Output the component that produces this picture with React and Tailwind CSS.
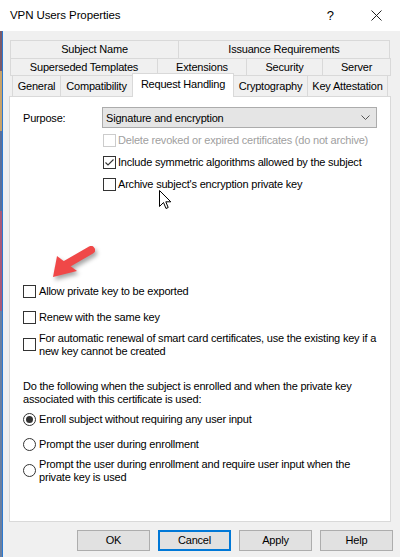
import React from "react";

const font = { fontFamily: '"Liberation Sans", Arial, sans-serif' };

function Box({ checked, disabled }) {
  return (
    <div
      className={
        "w-[13px] h-[13px] shrink-0 border bg-white flex items-center justify-center " +
        (disabled ? "border-[#cccccc]" : "border-[#333333]")
      }
    >
      {checked && (
        <svg width="11" height="11" viewBox="0 0 11 11">
          <polyline points="1.5,5.5 4,8 9.5,2.5" fill="none" stroke="#333" strokeWidth="1.1" />
        </svg>
      )}
    </div>
  );
}

function Radio({ checked }) {
  return (
    <div className="w-[13px] h-[13px] shrink-0 rounded-full border border-[#333333] bg-white flex items-center justify-center">
      {checked && <div className="w-[7px] h-[7px] rounded-full bg-[#333333]" />}
    </div>
  );
}

function Tab({ w, children, className = "" }) {
  return (
    <div
      className={
        "h-full -ml-px first:ml-0 border border-[#d9d9d9] bg-[#f0f0f0] flex items-center justify-center whitespace-nowrap " +
        w +
        " " +
        className
      }
    >
      {children}
    </div>
  );
}

function Btn({ children, focus }) {
  return (
    <div
      className={
        "w-[73px] h-[21px] bg-[#e1e1e1] flex items-center justify-center " +
        (focus ? "border-2 border-[#0078d7]" : "border border-[#adadad]")
      }
    >
      {children}
    </div>
  );
}

export default function App() {
  return (
    <div
      className="w-[400px] h-[557px] bg-[#f0f0f0] flex flex-col overflow-hidden relative text-[11px] text-black tracking-[-0.2px] leading-[13px]"
      style={font}
    >
      {/* Title bar */}
      <div className="h-[31px] bg-white flex items-center shrink-0">
        <span className="ml-[10px] text-[11.5px] tracking-[-0.1px]">VPN Users Properties</span>
        <span className="ml-auto text-[13px] mr-[37px] tracking-normal">?</span>
        <svg width="11" height="11" viewBox="0 0 11 11" className="mr-[18px]">
          <path d="M0.5 0.5 L10.5 10.5 M10.5 0.5 L0.5 10.5" stroke="#222" strokeWidth="1" />
        </svg>
      </div>

      {/* Body */}
      <div className="flex-1 flex">
        <div className="w-[2px] flex flex-col">
          <div className="h-[40px] bg-[#7a5a6a]" />
          <div className="h-[60px] bg-[#c9a36a]" />
          <div className="h-[80px] bg-[#5a6f9a]" />
          <div className="h-[100px] bg-[#a85a7a]" />
          <div className="flex-1 bg-[#6a7fa0]" />
        </div>
        <div className="flex-1 border-l border-[#2b79d0] flex flex-col">
          <div className="pt-[9px] pl-[7px] flex flex-col">
            {/* Row 1 */}
            <div className="flex h-[19px]">
              <Tab w="w-[169px]">Subject Name</Tab>
              <Tab w="w-[212px]">Issuance Requirements</Tab>
            </div>
            {/* Row 2 */}
            <div className="flex h-[18px] -mt-px">
              <Tab w="w-[148px]">Superseded Templates</Tab>
              <Tab w="w-[90px]">Extensions</Tab>
              <Tab w="w-[77px]">Security</Tab>
              <Tab w="w-[69px]">Server</Tab>
            </div>
            {/* Row 3 */}
            <div className="flex h-[22px] -mt-px ml-[2px] items-end relative z-10">
              <Tab w="w-[49px]">General</Tab>
              <Tab w="w-[73px]">Compatibility</Tab>
              <div className="w-[102px] h-[24px] -ml-px border border-b-0 border-[#d9d9d9] bg-white flex items-start pt-[4px] justify-center whitespace-nowrap self-start -mt-[2px]">
                Request Handling
              </div>
              <Tab w="w-[75px]">Cryptography</Tab>
              <Tab w="w-[81px]">Key Attestation</Tab>
            </div>
          </div>

          {/* Panel */}
          <div className="ml-[6px] -mt-px w-[382px] h-[426px] border border-[#d9d9d9] bg-white pl-[13px] pt-[10px] flex flex-col">
            <div className="flex items-center h-[21px]">
              <span className="w-[79px] pt-[1px]">Purpose:</span>
              <div className="w-[275px] h-[21px] bg-[#e5e5e5] border border-[#acacac] flex items-center pl-[3px] pr-[6px]">
                <span className="pt-[1px]">Signature and encryption</span>
                <svg width="9" height="5" viewBox="0 0 9 5" className="ml-auto">
                  <polyline points="0.5,0.5 4.5,4.5 8.5,0.5" fill="none" stroke="#555" strokeWidth="1" />
                </svg>
              </div>
            </div>

            <div className="ml-[80px] mt-[1px] flex flex-col">
              <div className="h-[22px] flex items-center gap-[2px]">
                <Box disabled />
                <span className="text-[#a0a0a0] whitespace-nowrap pt-[1px]">Delete revoked or expired certificates (do not archive)</span>
              </div>
              <div className="h-[22px] flex items-center gap-[2px]">
                <Box checked />
                <span className="whitespace-nowrap pt-[1px]">Include symmetric algorithms allowed by the subject</span>
              </div>
              <div className="h-[22px] flex items-center gap-[2px]">
                <Box />
                <span className="whitespace-nowrap pt-[1px]">Archive subject's encryption private key</span>
              </div>
            </div>

            <div className="mt-[85px] h-[22px] flex items-center gap-[3px]">
              <Box />
              <span className="whitespace-nowrap pt-[1px]">Allow private key to be exported</span>
            </div>
            <div className="mt-[4px] h-[22px] flex items-center gap-[3px]">
              <Box />
              <span className="whitespace-nowrap pt-[1px]">Renew with the same key</span>
            </div>
            <div className="mt-[3px] h-[26px] flex items-center gap-[3px]">
              <Box />
              <span className="whitespace-nowrap pt-[1px]">
                For automatic renewal of smart card certificates, use the existing key if a
                <br />
                new key cannot be created
              </span>
            </div>

            <div className="mt-[22px] whitespace-nowrap pt-[1px]">
              Do the following when the subject is enrolled and when the private key
              <br />
              associated with this certificate is used:
            </div>
            <div className="mt-[2px] h-[22px] flex items-center gap-[3px]">
              <Radio checked />
              <span className="whitespace-nowrap pt-[1px]">Enroll subject without requiring any user input</span>
            </div>
            <div className="mt-[3px] h-[22px] flex items-center gap-[3px]">
              <Radio />
              <span className="whitespace-nowrap pt-[1px]">Prompt the user during enrollment</span>
            </div>
            <div className="mt-[2px] h-[26px] flex items-center gap-[3px]">
              <Radio />
              <span className="whitespace-nowrap pt-[1px]">
                Prompt the user during enrollment and require user input when the
                <br />
                private key is used
              </span>
            </div>
          </div>

          {/* Buttons */}
          <div className="mt-[8px] ml-[74px] flex gap-[8px]">
            <Btn>OK</Btn>
            <Btn focus>Cancel</Btn>
            <Btn>Apply</Btn>
            <Btn>Help</Btn>
          </div>
        </div>
      </div>

      {/* Red annotation arrow */}
      <svg
        className="absolute left-[45px] top-[240px] drop-shadow-[2px_3px_2px_rgba(0,0,0,0.35)]"
        width="55"
        height="45"
        viewBox="45 240 55 45"
      >
        <line x1="65" y1="265" x2="91" y2="250" stroke="#f04848" strokeWidth="8" strokeLinecap="round" />
        <polygon points="53,277 57,256 77,271" fill="#f04848" />
      </svg>

      {/* Mouse cursor */}
      <svg className="absolute left-[159px] top-[190px]" width="13" height="20" viewBox="0 0 13 20">
        <path
          d="M0.5 0.5 L0.5 16.5 L4.5 12.5 L7 18.5 L9.2 17.5 L6.8 11.8 L11.8 11.8 Z"
          fill="white"
          stroke="black"
          strokeWidth="1"
          strokeLinejoin="miter"
        />
      </svg>
    </div>
  );
}
